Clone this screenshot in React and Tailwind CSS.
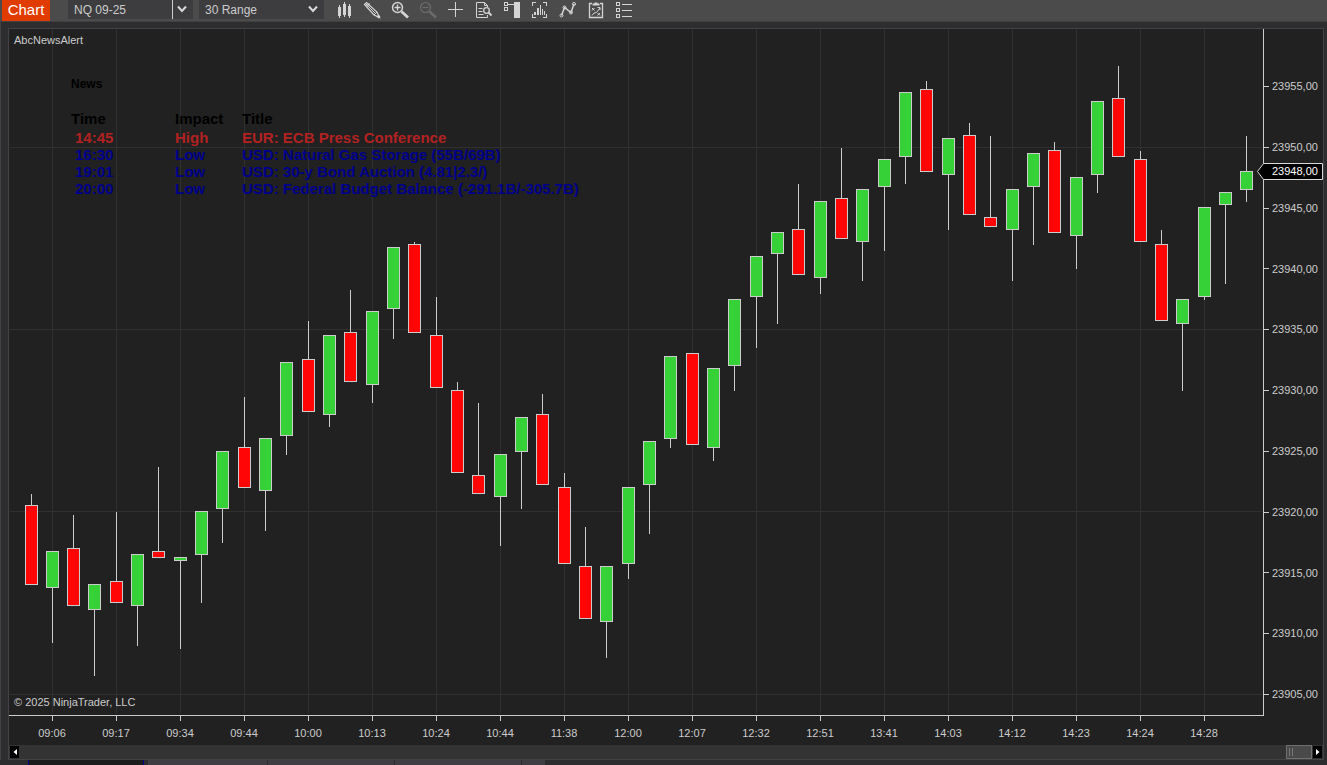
import React from 'react';

const UP = '#36d136';
const DOWN = '#ff0505';

// Candles: [center x, wick top, body top, body bottom, wick bottom, is up]
const candles = [
    [31, 494, 505, 585, 585, 0],
    [52, 551, 551, 588, 643, 1],
    [73, 515, 548, 606, 606, 0],
    [94, 584, 584, 610, 676, 1],
    [116, 512, 581, 603, 603, 0],
    [137, 554, 554, 606, 646, 1],
    [158, 467, 551, 558, 558, 0],
    [180, 557, 557, 561, 649, 1],
    [201, 511, 511, 555, 603, 1],
    [222, 451, 451, 509, 543, 1],
    [244, 397, 447, 488, 488, 0],
    [265, 438, 438, 491, 531, 1],
    [286, 362, 362, 436, 455, 1],
    [308, 321, 359, 412, 412, 0],
    [329, 335, 335, 415, 427, 1],
    [350, 290, 332, 382, 382, 0],
    [372, 311, 311, 385, 403, 1],
    [393, 247, 247, 309, 339, 1],
    [414, 242, 244, 333, 333, 0],
    [436, 297, 335, 388, 388, 0],
    [457, 382, 390, 473, 473, 0],
    [478, 403, 475, 494, 494, 0],
    [500, 454, 454, 497, 546, 1],
    [521, 417, 417, 452, 509, 1],
    [542, 394, 414, 485, 485, 0],
    [564, 473, 487, 564, 564, 0],
    [585, 527, 566, 619, 619, 0],
    [606, 566, 566, 622, 658, 1],
    [628, 487, 487, 564, 579, 1],
    [649, 441, 441, 485, 534, 1],
    [670, 356, 356, 439, 448, 1],
    [692, 353, 353, 445, 445, 0],
    [713, 368, 368, 448, 461, 1],
    [734, 299, 299, 366, 391, 1],
    [756, 256, 256, 297, 348, 1],
    [777, 232, 232, 254, 324, 1],
    [798, 184, 229, 275, 275, 0],
    [820, 201, 201, 278, 294, 1],
    [841, 148, 198, 239, 239, 0],
    [862, 189, 189, 242, 281, 1],
    [884, 159, 159, 187, 251, 1],
    [905, 92, 92, 157, 184, 1],
    [926, 81, 89, 172, 172, 0],
    [948, 138, 138, 175, 230, 1],
    [969, 123, 135, 215, 215, 0],
    [990, 136, 217, 227, 227, 0],
    [1012, 189, 189, 230, 281, 1],
    [1033, 153, 153, 187, 245, 1],
    [1054, 142, 150, 233, 233, 0],
    [1076, 177, 177, 236, 269, 1],
    [1097, 101, 101, 175, 193, 1],
    [1118, 66, 98, 157, 157, 0],
    [1140, 151, 159, 242, 242, 0],
    [1161, 230, 244, 321, 321, 0],
    [1182, 299, 299, 324, 391, 1],
    [1204, 207, 207, 297, 300, 1],
    [1225, 192, 192, 205, 284, 1],
    [1246, 136, 171, 190, 202, 1],
];

const times = [
    '09:06', '09:17', '09:34', '09:44', '10:00', '10:13', '10:24', '10:44', '11:38', '12:00',
    '12:07', '12:32', '12:51', '13:41', '14:03', '14:12', '14:23', '14:24', '14:28',
];

const prices = [
    '23955,00', '23950,00', '23945,00', '23940,00', '23935,00', '23930,00',
    '23925,00', '23920,00', '23915,00', '23910,00', '23905,00',
];

const news = [
    { time: '14:45', impact: 'High', title: 'EUR: ECB Press Conference', color: 'text-[#b22222]' },
    { time: '16:30', impact: 'Low', title: 'USD: Natural Gas Storage (55B/69B)', color: 'text-[#00008b]' },
    { time: '19:01', impact: 'Low', title: 'USD: 30-y Bond Auction (4.81|2.3/)', color: 'text-[#00008b]' },
    { time: '20:00', impact: 'Low', title: 'USD: Federal Budget Balance (-291.1B/-305.7B)', color: 'text-[#00008b]' },
];

// Toolbar icons, all drawn on a 20x20 grid
const tools = [
    {
        name: 'Chart style',
        icon: (
            <g fill="currentColor" shapeRendering="crispEdges">
                <path d="M4 7h3v9H4zM5 5h1v13H5zM9 4h3v11H9zM10 2h1v15h-1zM14 6h3v10h-3zM15 4h1v14h-1z" />
            </g>
        ),
    },
    {
        name: 'Drawing tools',
        icon: (
            <g fill="none" stroke="currentColor">
                <path d="M2.500 4.500l2-2L15 12l2.500 5.500L12 15z" strokeWidth="1.200" />
                <path d="M3.500 3.500l10 10M12 15l3-3" />
                <path d="M4.500 6.500l3-3" strokeWidth="1.500" />
                <path d="M15.500 15.500l2 2" strokeWidth="2.800" />
            </g>
        ),
    },
    {
        name: 'Zoom in',
        icon: (
            <g fill="none" stroke="currentColor">
                <circle cx="7.500" cy="7.500" r="5" strokeWidth="1.500" />
                <path d="M4.500 7.500h6M7.500 4.500v6" strokeWidth="1.400" />
                <path d="M11.500 11.500L18 17.500" strokeWidth="2.800" />
            </g>
        ),
    },
    {
        name: 'Zoom out',
        disabled: true,
        icon: (
            <g fill="none" stroke="currentColor">
                <circle cx="7.500" cy="7.500" r="5" strokeWidth="1.200" />
                <path d="M4.500 7.500h6" strokeWidth="1.200" />
                <path d="M11.500 11.500L18 17.500" strokeWidth="2.400" />
            </g>
        ),
    },
    {
        name: 'Crosshair',
        icon: <path d="M9.500 2v15M2 9.500h15" stroke="currentColor" shapeRendering="crispEdges" />,
    },
    {
        name: 'Data series',
        icon: (
            <g fill="none" stroke="currentColor">
                <path d="M13.500 15v2.500h-11v-15h8l3 3V7M10.500 2.500v3h3M4.500 8.500h4M4.500 11.500h4M4.500 14.500h5" />
                <circle cx="12.500" cy="10.500" r="2.800" strokeWidth="1.300" />
                <path d="M14.500 12.500l3 3" strokeWidth="2" />
            </g>
        ),
    },
    {
        name: 'Chart trader',
        icon: (
            <g fill="none" stroke="currentColor" shapeRendering="crispEdges">
                <path d="M2.500 2.500h3v3h-3zM2.500 7.500h3v3h-3zM6 4.500h6" />
                <path d="M12 2h6v16h-6z" fill="currentColor" stroke="none" />
            </g>
        ),
    },
    {
        name: 'Indicators',
        icon: (
            <g fill="none" stroke="currentColor" shapeRendering="crispEdges">
                <path d="M2.500 6V2.500H6M13 2.500h3.500V6M2.500 14v3.500H6M13 17.500h3.500V14" />
                <path d="M4 12h2v3H4zM7 8h2v7H7zM9.500 5h1.500v10H9.500zM12 9h1v6h-1zM14 11h1v4h-1z" fill="currentColor" stroke="none" />
            </g>
        ),
    },
    {
        name: 'Strategies',
        icon: (
            <g fill="none" stroke="currentColor">
                <path d="M3.500 15.500l3-8 6.500 5 3-8.500" strokeWidth="1.500" />
                <circle cx="3.500" cy="15.500" r="1.500" />
                <circle cx="6.500" cy="7.500" r="1.500" />
                <circle cx="13" cy="12.500" r="1.500" />
                <circle cx="16" cy="4" r="1.500" />
            </g>
        ),
    },
    {
        name: 'Strategy template',
        icon: (
            <g fill="none" stroke="currentColor">
                <path d="M6 3.500H3.500v14h13v-14H14" strokeWidth="1.300" />
                <path d="M6.500 5.500v-2h2v-1h3v1h2v2z" fill="currentColor" stroke="none" />
                <path d="M6 8l2.500 2.500M8.500 8L6 10.500M11.500 13l2.500 2.500M14 13l-2.500 2.500M6 15.500l2-2.500 2.500-.500L14 8M11.500 7.500H14V10" />
            </g>
        ),
    },
    {
        name: 'Properties',
        icon: (
            <g fill="none" stroke="currentColor" shapeRendering="crispEdges">
                <path d="M2.500 2.500h3v3h-3zM2.500 8.500h3v3h-3zM2.500 14.500h3v3h-3z" />
                <path d="M8 4.500h10M8 10.500h10M8 16.500h10" />
            </g>
        ),
    },
];

const Chevron = () => (
    <svg className="pointer-events-none absolute top-1 right-1.5 h-2.5 w-2.5" viewBox="0 0 10 10" fill="none" stroke="#d8d8d8" strokeWidth="2">
        <path d="M1 2.500l4 4.500 4-4.500" />
    </svg>
);

function Toolbar() {
    return (
        <header className="flex h-[22px] shrink-0 items-start border-b border-[#414143] bg-[#4b4b4b] pl-0.5">
            <h1 className="h-[21px] w-12 bg-[#e03c00] text-center text-[15px] leading-[20px] text-white">Chart</h1>
            <div className="relative ml-[18px] h-[19px] w-[125px] bg-[#3d3d40]">
                <select aria-label="Instrument" className="block h-[19px] w-[105px] appearance-none border-r border-[#cccccc] pl-1.5 text-xs text-[#cccccc]">
                    <option>NQ 09-25</option>
                </select>
                <Chevron />
            </div>
            <div className="relative ml-1.5 h-[19px] w-[125px] bg-[#3d3d40]">
                <select aria-label="Interval" className="block h-[19px] w-full appearance-none pl-1.5 text-xs text-[#cccccc]">
                    <option>30 Range</option>
                </select>
                <Chevron />
            </div>
            <div className="ml-1.5 flex">
                {tools.map((tool) => (
                    <button key={tool.name} type="button" aria-label={tool.name} disabled={tool.disabled} className="flex w-7 justify-center text-[#d4d4d4] disabled:text-[#6c6c6c]">
                        <svg className="h-5 w-5" viewBox="0 0 20 20">{tool.icon}</svg>
                    </button>
                ))}
            </div>
        </header>
    );
}

function NewsTable() {
    return (
        <section className="absolute top-[47px] left-[62px] font-bold">
            <h2 className="text-xs leading-4 text-black">News</h2>
            <table className="mt-[18px] text-left text-[15px] leading-[17px] whitespace-nowrap">
                <thead className="text-black">
                    <tr>
                        <th className="h-[19px] w-[104px] p-0 align-top">Time</th>
                        <th className="w-[67px] p-0 align-top">Impact</th>
                        <th className="p-0 align-top">Title</th>
                    </tr>
                </thead>
                <tbody>
                    {news.map((row) => (
                        <tr key={row.time} className={row.color}>
                            <td className="p-0 pl-1">{row.time}</td>
                            <td className="p-0">{row.impact}</td>
                            <td className="p-0">{row.title}</td>
                        </tr>
                    ))}
                </tbody>
            </table>
        </section>
    );
}

// The plot area: grid lines, then the candles on top of them
function Plot() {
    return (
        <svg className="absolute inset-0 h-full w-full" viewBox="9 29 1254 686" preserveAspectRatio="none" shapeRendering="crispEdges">
            {times.map((t, i) => (
                <rect key={t} x={52 + i * 64} y="29" width="1" height="684" fill="#303030" />
            ))}
            {[147, 329, 511, 694].map((y) => (
                <rect key={y} x="10" y={y} width="1252" height="1" fill="#303030" />
            ))}
            {candles.map(([x, high, top, bottom, low, up]) => (
                <g key={x}>
                    <rect x={x} y={high} width="1" height={low - high} fill="#cccccc" />
                    <rect x={x - 6} y={top} width="13" height={bottom - top} fill="#cccccc" />
                    <rect x={x - 5} y={top + 1} width="11" height={bottom - top - 2} fill={up ? UP : DOWN} />
                </g>
            ))}
        </svg>
    );
}

function PriceAxis() {
    return (
        <aside className="relative flex w-[59px] shrink-0 flex-col pt-[27px] pb-5 text-[11px] text-[#cccccc]">
            {prices.map((p) => (
                <div key={p} className="flex flex-1 items-center">
                    <span className="mr-[3px] h-px w-[5px] bg-[#cccccc]" />
                    {p}
                </div>
            ))}
            {/* Last price marker */}
            <div className="absolute top-[134px] -left-[7px] h-[17px] w-[66px]">
                <svg className="absolute inset-0 h-full w-full" viewBox="0 0 66 17">
                    <path d="M6.500 .500h59v16h-59l-6-8z" fill="#000" stroke="#d8d8d8" />
                </svg>
                <span className="relative block pl-[15px] leading-[17px] text-white">23948,00</span>
            </div>
        </aside>
    );
}

function TimeAxis() {
    return (
        <div className="flex h-[30px] shrink-0 border-t border-[#cccccc] pr-7 pl-[11px] text-[11px] text-[#cccccc]">
            {times.map((t) => (
                <div key={t} className="flex flex-1 flex-col items-center">
                    <span className="mb-[5px] h-[5px] w-px bg-[#cccccc]" />
                    <span className="leading-[14px]">{t}</span>
                </div>
            ))}
        </div>
    );
}

function ScrollBar() {
    return (
        <div className="flex h-3.5 shrink-0 items-center bg-[#333333] pr-px pl-px">
            <button type="button" aria-label="Scroll left" className="flex h-3 w-[9px] items-center justify-center bg-black">
                <svg className="h-1.5 w-1" viewBox="0 0 4 6"><path d="M4 0v6L.500 3z" fill="#fff" /></svg>
            </button>
            <div className="mr-px ml-auto h-3.5 w-[26px] border border-[#707070] bg-[#4a4a4a]">
                <div className="mt-0.5 ml-0.5 h-2 w-1 border-x border-[#777777]" />
            </div>
            <button type="button" aria-label="Scroll right" className="flex h-3 w-[9px] items-center justify-center bg-black">
                <svg className="h-1.5 w-1" viewBox="0 0 4 6"><path d="M0 0v6l3.500-3z" fill="#fff" /></svg>
            </button>
        </div>
    );
}

function BottomTabs() {
    return (
        <footer className="flex h-[5px] shrink-0 pl-[28px]">
            <div className="w-[116px] border-x border-[#00008b] bg-[#1c1c1c]" />
            <div className="ml-1 w-[120px] border-r border-[#2d2d2f] bg-[#3f3f43]" />
            <div className="w-[127px] border-r border-[#2d2d2f] bg-[#3f3f43]" />
            <div className="w-[127px] border-r border-[#2d2d2f] bg-[#3f3f43]" />
            <div className="w-[23px] bg-[#3f3f43]" />
        </footer>
    );
}

export default function App() {
    return (
        <div className="flex h-screen flex-col overflow-hidden bg-[#2d2d2f] font-['Liberation_Sans',Arial,sans-serif]">
            <Toolbar />
            <div className="flex min-h-0 flex-1 border-l border-[#414145] pt-1.5 pr-[3px] pl-[7px]">
                <main className="flex min-w-0 flex-1 flex-col border border-[#434347] bg-[#212121]">
                    <div className="flex min-h-0 flex-1">
                        <div className="flex min-w-0 flex-1 flex-col">
                            <div className="relative min-h-0 flex-1 border-r border-[#cccccc]">
                                <Plot />
                                <p className="absolute top-[3px] left-[5px] text-[11px] leading-4 text-[#cccccc]">AbcNewsAlert</p>
                                <NewsTable />
                                <p className="absolute bottom-[5px] left-[5px] text-[11px] leading-4 text-[#cccccc]">© 2025 NinjaTrader, LLC</p>
                            </div>
                            <TimeAxis />
                        </div>
                        <PriceAxis />
                    </div>
                    <ScrollBar />
                </main>
            </div>
            <BottomTabs />
        </div>
    );
}
